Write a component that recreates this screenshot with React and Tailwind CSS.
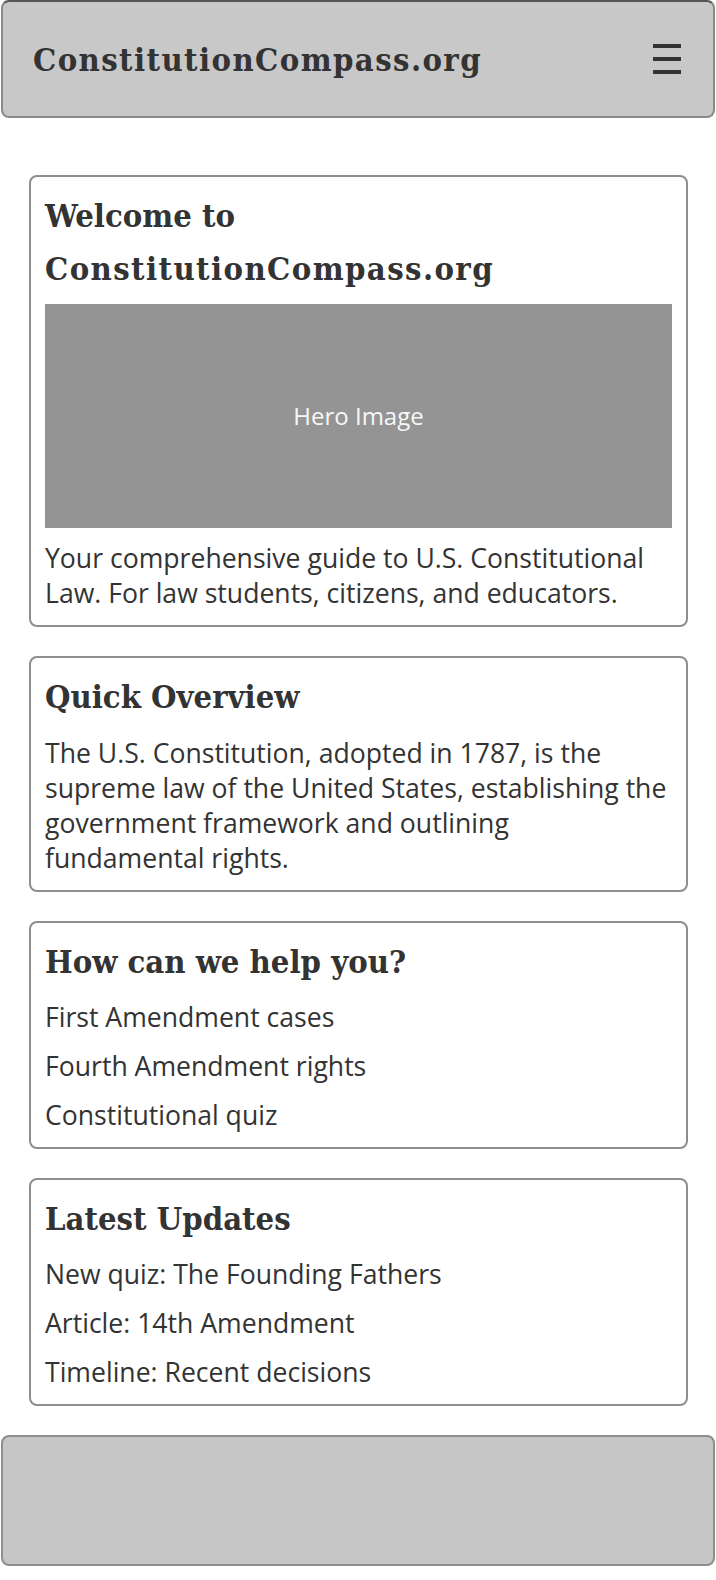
const serif = "font-['DejaVu_Serif_Condensed','DejaVu_Serif',serif] [font-stretch:condensed]";
const sans = "font-['Open_Sans',sans-serif]";

function Brand() {
  return <span className="tracking-[1.4px]">ConstitutionCompass.org</span>;
}

function Card({ children }) {
  return (
    <section className="rounded-lg border-2 border-[#8e8e8e] bg-white px-[14px] pt-[12px] pb-[13px]">
      {children}
    </section>
  );
}

function CardTitle({ children }) {
  return (
    <h2 className={`${serif} text-[32.5px] leading-[53px] font-bold text-[#333]`}>
      {children}
    </h2>
  );
}

function LinkList({ items }) {
  return (
    <ul className="mt-[12px] mb-[1px] flex flex-col gap-[14px]">
      {items.map((item) => (
        <li key={item} className="text-[26.6px] leading-[35px] text-[#333]">
          {item}
        </li>
      ))}
    </ul>
  );
}

export default function App() {
  return (
    <div className={`${sans} min-h-[1580px] bg-white pb-[14px]`}>
      <header className="mx-[1px] flex h-[118px] items-center justify-between rounded-lg border-2 border-[#8a8a8a] border-t-[#555] bg-[#c8c8c8] pr-[32px] pl-[30px]">
        <span className={`${serif} text-[32.5px] leading-[53px] font-bold text-[#333]`}>
          <Brand />
        </span>
        <button aria-label="Menu" className="flex h-[30px] w-[28px] flex-col justify-between">
          <span className="block h-[4px] w-full bg-[#333]" />
          <span className="block h-[4px] w-full bg-[#333]" />
          <span className="block h-[4px] w-full bg-[#333]" />
        </button>
      </header>

      <main className="mt-[57px] flex flex-col gap-[29px] pl-[29px] pr-[28px]">
        <Card>
          <CardTitle>
            Welcome to
            <br />
            <Brand />
          </CardTitle>
          <div className="mt-[9px] flex h-[224px] items-center justify-center bg-[#949494] text-[24px] text-[#f7f7f7]">
            Hero Image
          </div>
          <p className="mt-[13px] text-[26.6px] leading-[35.3px] text-[#333]">
            Your comprehensive guide to U.S. Constitutional Law. For law students, citizens, and educators.
          </p>
        </Card>

        <Card>
          <CardTitle>Quick Overview</CardTitle>
          <p className="mt-[13px] text-[26.6px] leading-[35.3px] text-[#333]">
            The U.S. Constitution, adopted in 1787, is the supreme law of the United States, establishing the
            government framework and outlining fundamental rights.
          </p>
        </Card>

        <Card>
          <CardTitle>How can we help you?</CardTitle>
          <LinkList items={["First Amendment cases", "Fourth Amendment rights", "Constitutional quiz"]} />
        </Card>

        <Card>
          <CardTitle>Latest Updates</CardTitle>
          <LinkList items={["New quiz: The Founding Fathers", "Article: 14th Amendment", "Timeline: Recent decisions"]} />
        </Card>
      </main>

      <footer className="mx-[1px] mt-[29px] h-[131px] rounded-lg border-2 border-[#8e8e8e] bg-[#c6c6c7]" />
    </div>
  );
}
